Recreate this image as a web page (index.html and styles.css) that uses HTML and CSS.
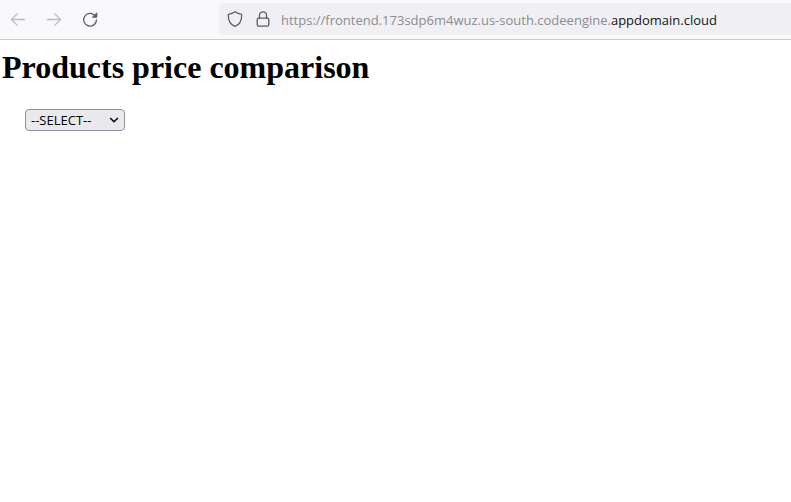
FILE: index.html
```html
<!DOCTYPE html>
<html lang="en">
<head>
<meta charset="utf-8">
<meta name="viewport" content="width=device-width, initial-scale=1">
<title>Products price comparison</title>
<link rel="stylesheet" href="styles.css">
</head>
<body>
<header class="toolbar">
  <nav class="nav-buttons" aria-label="Browser navigation">
    <button class="nav-button" type="button" aria-label="Back" disabled>
      <svg class="icon" viewBox="0 0 16 16"><path d="M14.500 8.500H1.500M7 3L1.500 8.500l5.500 5.500"/></svg>
    </button>
    <button class="nav-button" type="button" aria-label="Forward" disabled>
      <svg class="icon" viewBox="0 0 16 16"><path d="M1.500 8.500h13M9 3l5.500 5.500l-5.500 5.500"/></svg>
    </button>
    <button class="nav-button" type="button" aria-label="Reload">
      <svg class="icon" viewBox="0 0 16 16"><path d="M12.700 4.300A6.400 6.400 0 1 0 14.500 8.800"/><path class="solid" d="M14.800 2.200v4H10.800z"/></svg>
    </button>
  </nav>
  <div class="address">
    <button class="address-button" type="button" aria-label="Tracking protection">
      <svg class="icon" viewBox="0 0 16 16"><path d="M8 .8C6.200 2.300 3.800 3.100 1.300 3.300C1.100 8.500 3 13.500 8 15.400C13 13.500 14.900 8.500 14.700 3.300C12.200 3.100 9.800 2.300 8 .8z"/></svg>
    </button>
    <button class="address-button" type="button" aria-label="Connection secure">
      <svg class="icon" viewBox="0 0 16 16"><rect x="2.200" y="7.200" width="11.600" height="8" rx="1.600"/><path d="M4.500 7V4.300a3.500 3.500 0 0 1 7 0V7"/></svg>
    </button>
    <div class="url" role="textbox" aria-label="Address" contenteditable="true" spellcheck="false">https://frontend.173sdp6m4wuz.us-south.codeengine.<span class="domain">appdomain.cloud</span></div>
  </div>
</header>
<main class="page">
  <h1 class="title">Products price comparison</h1>
  <form class="picker">
    <div class="select-box">
      <select class="select" aria-label="Product">
        <option>--SELECT--</option>
      </select>
      <svg class="chevron" viewBox="0 0 10 10" aria-hidden="true"><path d="M1.200 3l3.800 3.800L8.800 3"/></svg>
    </div>
  </form>
</main>
</body>
</html>
```
FILE: styles.css
```css
* {
  box-sizing: border-box;
}

body {
  margin: 0;
  background: #fff;
  color: #000;
}

.toolbar {
  display: flex;
  align-items: center;
  padding: 3px 0 4px 8px;
  background: #f9f9fb;
  border-bottom: 1px solid #ccc;
}

.nav-buttons {
  display: flex;
  flex: none;
  gap: 16px;
  width: 211px;
}

.nav-button,
.address-button {
  display: flex;
  align-items: center;
  justify-content: center;
  width: 20px;
  height: 20px;
  padding: 0;
  border: 0;
  background: none;
  color: #5b5b66;
}

.nav-button:disabled {
  color: #bcbcc1;
}

.icon {
  width: 16px;
  height: 16px;
  fill: none;
  stroke: currentColor;
  stroke-width: 1.3;
  stroke-linecap: round;
  stroke-linejoin: round;
}

.icon .solid {
  fill: currentColor;
  stroke-width: 1;
}

.address {
  display: flex;
  flex: 1;
  align-items: center;
  gap: 8px;
  min-width: 0;
  height: 32px;
  padding-left: 6px;
  background: #f0f0f4;
  border-radius: 4px 0 0 4px;
}

.address-button {
  flex: none;
}

.url {
  flex: 1;
  padding-top: 2px;
  overflow: hidden;
  color: #8c8b92;
  font: 13px/22px "Open Sans", sans-serif;
  white-space: nowrap;
  outline: none;
}

.domain {
  color: #15141a;
}

.page {
  padding: 10px 2px;
}

.title {
  margin: 0;
  font: bold 32px/35px "Liberation Serif", serif;
}

.picker {
  display: flex;
  margin: 24px 23px;
}

.select-box {
  position: relative;
}

.select {
  display: block;
  width: 100px;
  height: 22px;
  padding: 0 20px 0 5px;
  appearance: none;
  background: #e9e9ed;
  border: 1px solid #8f8f9d;
  border-radius: 4px;
  color: #000;
  font: 13px/20px "Open Sans", sans-serif;
}

.chevron {
  position: absolute;
  top: 6px;
  right: 6px;
  width: 10px;
  height: 10px;
  fill: none;
  stroke: #000;
  stroke-width: 1.5;
  pointer-events: none;
}
```
